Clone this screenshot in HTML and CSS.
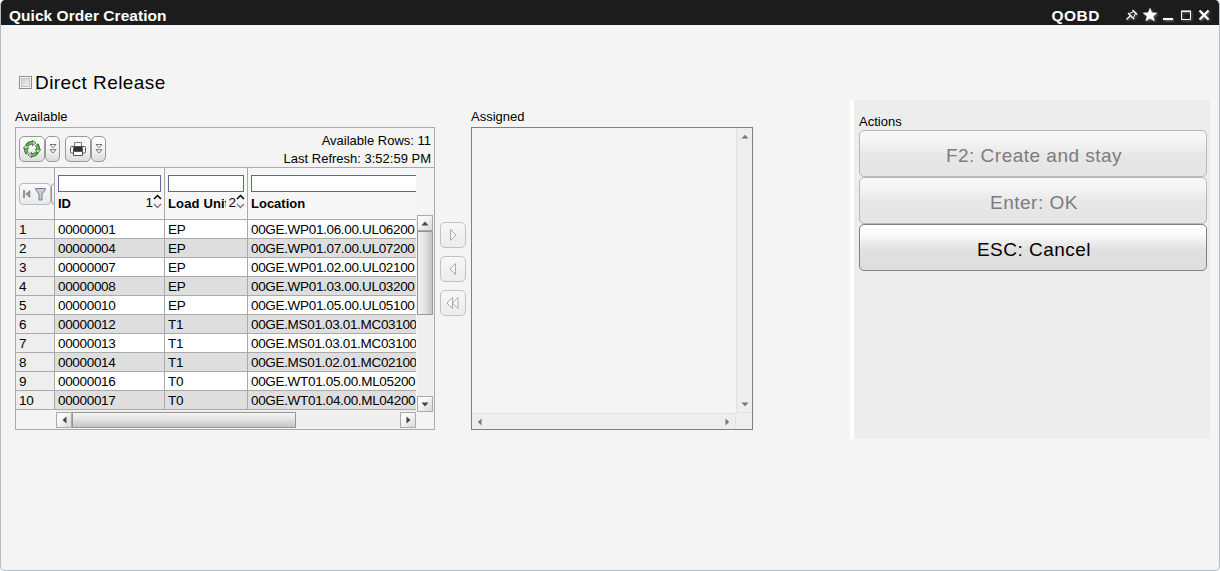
FILE: index.html
```html
<!DOCTYPE html>
<html lang="en">
<head>
<meta charset="utf-8">
<title>Quick Order Creation</title>
<link rel="stylesheet" href="styles.css">
</head>
<body>
<div class="window">
  <header class="titlebar">
    <h1 class="title">Quick Order Creation</h1>
    <span class="code">QOBD</span>
    <svg class="win-icons" width="88" height="16" viewBox="0 0 88 16">
      <g fill="none" stroke="#fff">
        <path d="M1.500 12.500 5.500 8.500" stroke-width="1.300"/>
        <path d="M3 6 9 12" stroke-width="1.300"/>
        <path d="M4.500 6.500 8.500 4.500 10.500 6.500 8.500 10.500" stroke-width="1"/>
        <path d="M7.500 3 12 7.500" stroke-width="1.300"/>
        <path d="M38 12h10" stroke-width="2"/>
        <path d="M56.500 4.500h9v8h-9zM56 4h10"/>
        <path d="M74.500 3.500l9 9M83.500 3.500l-9 9" stroke-width="2.200"/>
      </g>
      <path fill="#fff" d="M25 .5l2 5 5.500.3-4.300 3.400 1.500 5.100L25 11.500l-4.700 2.800 1.500-5.100-4.300-3.400 5.500-.3z"/>
    </svg>
  </header>

  <main class="content">
    <section class="left">
      <label class="direct"><span class="check"></span><span>Direct Release</span></label>
      <div class="lists">
        <div class="available">
          <div class="caption">Available</div>
          <div class="grid">
            <div class="toolbar">
              <div class="tool-group">
                <span class="tool"><svg width="18" height="18" viewBox="0 0 18 18">
                  <g fill="none" stroke="#3d5a3b" stroke-width="3.600"><path d="M4 5.500A6.200 6.200 0 0 1 10 2.900M13.500 4.500A6.200 6.200 0 0 1 15 10M14 12.500A6.200 6.200 0 0 1 8 15M4.500 13.500A6.200 6.200 0 0 1 3 8"/></g>
                  <g fill="#eafbe6" stroke="#3d5a3b" stroke-width=".8"><path d="M9.500.3 13 3 9.500 5.700zM17.800 9.500 15 13 12.200 9.500zM8.500 17.700 5 15l3.500-2.700zM.2 8.500 3 5l2.800 3.500z"/></g>
                  <g fill="none" stroke="#52c845" stroke-width="2"><path d="M4.500 5A6 6 0 0 1 10.500 3M13.500 5A6.200 6.200 0 0 1 15 10.500M13.500 13A6.200 6.200 0 0 1 7.500 15M4.500 13A6.200 6.200 0 0 1 3 7.500"/></g></svg></span><span class="tool narrow"><svg width="8" height="10" viewBox="0 0 8 10"><path d="M1 .5h6L4 3.800zM1 5.700h6L4 9z" fill="#fff" stroke="#555" stroke-width=".8"/></svg></span>
              </div>
              <div class="tool-group">
                <span class="tool"><svg width="16" height="16" viewBox="0 0 16 16">
                  <path d="M1.500 5.500h13q1 0 1 1v4q0 1.500-1 1.500h-13q-1 0-1-1.500v-4q0-1 1-1z" fill="#f4f4f4" stroke="#555"/>
                  <path d="M4.500 1.500h7v4h-7z" fill="#fff" stroke="#777"/>
                  <path d="M3.500 5.500h9l.5 5H3z" fill="#333"/>
                  <path d="M3.500 10.500h9v4h-9z" fill="#fff" stroke="#555"/></svg></span><span class="tool narrow"><svg width="8" height="10" viewBox="0 0 8 10"><path d="M1 .5h6L4 3.800zM1 5.700h6L4 9z" fill="#fff" stroke="#555" stroke-width=".8"/></svg></span>
              </div>
              <div class="status"><div>Available Rows: 11</div><div>Last Refresh: 3:52:59 PM</div></div>
            </div>
            <div class="grid-body">
              <div class="table">
                <div class="head">
                  <div class="cell corner">
                    <span class="filter"><svg width="26" height="14" viewBox="0 0 26 14">
                      <path d="M2 3v8" stroke="#777" stroke-width="1.500"/><path d="M8 3.500v7L3.500 7z" fill="#999" stroke="#777" stroke-width=".5"/>
                      <path d="M13.500 1.500h10v1L20 7v6h-3V7l-3.500-4.500z" fill="#c3cddb" stroke="#777f8a"/></svg></span><span class="filter next"></span>
                  </div>
                  <div class="cell"><span class="input"></span><div class="label"><b>ID</b><span class="order">1<svg width="9" height="16" viewBox="0 0 9 16"><path d="M1 5 4.500 1.500 8 5" fill="none" stroke="#000" stroke-width="1.500"/><path d="M1 10 4.500 13.500 8 10" fill="none" stroke="#777" stroke-width="1.300"/></svg></span></div></div>
                  <div class="cell"><span class="input"></span><div class="label"><b class="clip">Load Unit</b><span class="order">2<svg width="9" height="16" viewBox="0 0 9 16"><path d="M1 5 4.500 1.500 8 5" fill="none" stroke="#000" stroke-width="1.500"/><path d="M1 10 4.500 13.500 8 10" fill="none" stroke="#777" stroke-width="1.300"/></svg></span></div></div>
                  <div class="cell last"><span class="input open"></span><div class="label"><b>Location</b></div></div>
                </div>
                <div class="row"><div class="cell num">1</div><div class="cell">00000001</div><div class="cell">EP</div><div class="cell last">00GE.WP01.06.00.UL06200</div></div>
                <div class="row"><div class="cell num">2</div><div class="cell">00000004</div><div class="cell">EP</div><div class="cell last">00GE.WP01.07.00.UL07200</div></div>
                <div class="row"><div class="cell num">3</div><div class="cell">00000007</div><div class="cell">EP</div><div class="cell last">00GE.WP01.02.00.UL02100</div></div>
                <div class="row"><div class="cell num">4</div><div class="cell">00000008</div><div class="cell">EP</div><div class="cell last">00GE.WP01.03.00.UL03200</div></div>
                <div class="row"><div class="cell num">5</div><div class="cell">00000010</div><div class="cell">EP</div><div class="cell last">00GE.WP01.05.00.UL05100</div></div>
                <div class="row"><div class="cell num">6</div><div class="cell">00000012</div><div class="cell">T1</div><div class="cell last">00GE.MS01.03.01.MC03100</div></div>
                <div class="row"><div class="cell num">7</div><div class="cell">00000013</div><div class="cell">T1</div><div class="cell last">00GE.MS01.03.01.MC03100</div></div>
                <div class="row"><div class="cell num">8</div><div class="cell">00000014</div><div class="cell">T1</div><div class="cell last">00GE.MS01.02.01.MC02100</div></div>
                <div class="row"><div class="cell num">9</div><div class="cell">00000016</div><div class="cell">T0</div><div class="cell last">00GE.WT01.05.00.ML05200</div></div>
                <div class="row"><div class="cell num">10</div><div class="cell">00000017</div><div class="cell">T0</div><div class="cell last">00GE.WT01.04.00.ML04200</div></div>
                <div class="hscroll">
                  <span class="sb"><svg width="5" height="8" viewBox="0 0 5 8"><path d="M4.500 .5v7L.5 4z" fill="#444"/></svg></span><span class="hthumb"></span><span class="sb end"><svg width="5" height="8" viewBox="0 0 5 8"><path d="M.5 .5v7L4.500 4z" fill="#444"/></svg></span>
                </div>
              </div>
              <div class="vscroll">
                <span class="sb"><svg width="8" height="5" viewBox="0 0 8 5"><path d="M.5 4.500h7L4 .5z" fill="#444"/></svg></span><span class="vthumb"></span><span class="sb bottom"><svg width="8" height="5" viewBox="0 0 8 5"><path d="M.5 .5h7L4 4.500z" fill="#444"/></svg></span>
              </div>
            </div>
          </div>
        </div>

        <div class="transfer">
          <span class="move"><svg width="14" height="14" viewBox="0 0 14 14"><path d="M4.500 1.500v11l5.500-5.500z" fill="#fafafa" stroke="#aaa"/></svg></span>
          <span class="move"><svg width="14" height="14" viewBox="0 0 14 14"><path d="M9.500 1.500v11L4 7z" fill="#fafafa" stroke="#aaa"/></svg></span>
          <span class="move"><svg width="14" height="14" viewBox="0 0 14 14"><path d="M6.500 1.500v11L1 7zM12 1.500v11L6.500 7z" fill="#fafafa" stroke="#aaa"/></svg></span>
        </div>

        <div class="assigned">
          <div class="caption">Assigned</div>
          <div class="box">
            <div class="blank"></div>
            <div class="track-v">
              <svg width="8" height="5" viewBox="0 0 8 5"><path d="M.5 4.500h7L4 .8z" fill="#777"/></svg>
              <svg width="8" height="5" viewBox="0 0 8 5"><path d="M.5 .5h7L4 4.200z" fill="#777"/></svg>
            </div>
            <div class="track-h">
              <svg width="5" height="8" viewBox="0 0 5 8"><path d="M4.500 .5v7L.8 4z" fill="#777"/></svg>
              <svg width="5" height="8" viewBox="0 0 5 8"><path d="M.5 .5v7L4.200 4z" fill="#777"/></svg>
            </div>
          </div>
        </div>
      </div>
    </section>

    <aside class="actions">
      <div class="caption">Actions</div>
      <div class="action off">F2: Create and stay</div>
      <div class="action off">Enter: OK</div>
      <div class="action">ESC: Cancel</div>
    </aside>
  </main>
</div>
</body>
</html>
```

FILE: styles.css
```css
* { box-sizing: border-box; }
body { margin: 0; background: #fff; font: 13px/18px "Liberation Sans", Arial, sans-serif; color: #000; }
svg { display: block; flex: none; }
.window { width: 1220px; height: 571px; background: #f4f4f4; border: 1px solid #afbdc6; border-top: 0; border-radius: 5px; overflow: hidden; }
.titlebar { height: 25px; margin: 0 -1px; background: #1c1c1c; color: #fff; display: flex; align-items: flex-start; padding: 6px 7px 0 9px; }
.title, .code { margin: 0; font-size: 15.5px; line-height: 19px; font-weight: bold; }
.title { flex: 1; letter-spacing: .04px; }
.code { margin-right: 25px; letter-spacing: .5px; }
.win-icons { margin-top: 1px; filter: drop-shadow(1px 1px 1px #777); }
.content { display: flex; justify-content: space-between; padding: 0 9px 0 14px; }
.left { padding-top: 46px; }
.direct { display: flex; align-items: center; gap: 3px; height: 23px; padding-left: 4px; font-size: 19px; letter-spacing: .44px; }
.check { width: 13px; height: 13px; border: 1px solid #8e8f8f; background: linear-gradient(135deg, #c8ccd2, #f6f6f6); box-shadow: inset 0 0 0 1px #f4f4f4, inset 0 0 0 2px #c0c4c8; }
.lists { display: flex; padding-top: 14px; }
.caption { height: 19px; line-height: 18px; }
.available { width: 420px; }
.grid { height: 303px; border: 1px solid #aaa; }
.toolbar { display: flex; height: 40px; border-bottom: 1px solid #aaa; padding: 4px 3px 0; }
.tool-group { display: flex; width: 41px; margin: 4px 5px 0 0; }
.tool { display: flex; align-items: center; justify-content: center; width: 26px; height: 26px; border: 1px solid #999; border-radius: 5px; background: linear-gradient(#fff, #f4f4f4 50%, #dcdcdc); }
.narrow { width: 15px; }
.status { flex: 1; text-align: right; white-space: nowrap; }
.grid-body { display: flex; height: 261px; }
.table { width: 400px; overflow: hidden; }
.head, .row { display: grid; grid-template-columns: 39px 110px 83px 168px; }
.head { height: 52px; background: #f7f7f7; }
.head .cell { height: 52px; padding: 7px 3px 0; }
.cell { border-right: 1px solid #aaa; border-bottom: 1px solid #aaa; padding: 0 3px; white-space: nowrap; overflow: hidden; }
.cell.last { border-right: 0; }
.row { background: #fff; height: 19px; font-size: 13.5px; letter-spacing: -.33px; }
.row .cell { height: 19px; line-height: 19px; }
.row:nth-child(odd) { background: #dedede; }
.row .num { background: #eee; }
.head .corner { display: flex; padding: 15px 0 0 3px; background: #f4f4f4; }
.filter { display: flex; align-items: center; justify-content: center; flex: none; width: 32px; height: 22px; border: 1px solid #bbb; border-radius: 4px; background: linear-gradient(#fafafa, #e9e9e9); }
.next { width: 14px; border-color: #999; }
.input { display: block; width: 103px; height: 17px; border: 1px solid #5c6b8c; background: #fff; }
.head .cell:nth-child(3) .input { width: 76px; }
.head .open { width: 180px; }
.label { display: flex; justify-content: space-between; line-height: 20px; margin-top: 2px; height: 20px; }
.clip { width: 58px; overflow: hidden; letter-spacing: .15px; }
.order { display: flex; align-items: flex-start; font-size: 13.5px; line-height: 18px; margin-right: -1px; }
.hscroll { display: flex; height: 17px; margin-left: 39px; padding: 2px 0 0 1px; background: linear-gradient(90deg, #efefef, #efefef) no-repeat 1px 0; }
.sb { display: flex; align-items: center; justify-content: center; width: 16px; height: 16px; flex: none; border: 1px solid #aaa; background: linear-gradient(135deg, #fafafa 30%, #d8d8d8); }
.hthumb { width: 224px; height: 16px; border: 1px solid #979797; background: linear-gradient(#f3f3f3, #e4e4e4 45%, #c4c4c4); }
.end { margin-left: auto; }
.vscroll { display: flex; flex-direction: column; width: 16px; height: 197px; margin: 47px 0 0 1px; background: #efefef; }
.vthumb { height: 84px; border: 1px solid #979797; background: linear-gradient(90deg, #f3f3f3, #e4e4e4 45%, #c4c4c4); }
.bottom { margin-top: auto; }
.transfer { display: flex; flex-direction: column; gap: 8px; width: 36px; padding: 114px 0 0 5px; }
.move { display: flex; align-items: center; justify-content: center; width: 26px; height: 26px; border: 1px solid #c2c2c2; border-radius: 5px; background: linear-gradient(#f7f7f7, #ececec); }
.assigned { width: 282px; }
.box { display: grid; grid-template: 285px 16px / 264px 16px; height: 303px; border: 1px solid #808080; background: #eee; }
.blank { background: #f4f4f4; }
.track-v { display: flex; flex-direction: column; justify-content: space-between; align-items: center; padding: 6px 0 5px; border: 1px solid #e2e2e2; border-width: 0 0 1px 1px; background: #eee; }
.track-h { display: flex; justify-content: space-between; align-items: center; padding: 0 5px; border: 1px solid #e2e2e2; border-width: 1px 1px 0 0; background: #eee; }
.actions { width: 360px; height: 339px; margin-top: 75px; padding: 12px 3px 0 5px; border-left: 4px solid #fff; background: #ededed; }
.actions .caption { height: 18px; line-height: 20px; }
.action { height: 47px; border: 1px solid #808080; border-radius: 5px; background: linear-gradient(#fff 15%, #e0e0e0 55%, #dedede); font-size: 19px; letter-spacing: .49px; line-height: 49px; padding-left: 2px; text-align: center; }
.action.off { border-color: #b8b8b8; color: #7c7c7c; background: linear-gradient(#f7f7f7 15%, #e7e7e7 55%, #e5e5e5); }
```
